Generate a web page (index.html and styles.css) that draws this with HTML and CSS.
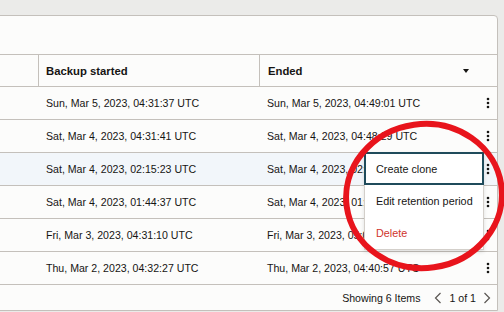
FILE: index.html
```html
<!DOCTYPE html>
<html>
  <head>
    <meta charset="UTF-8" />
    <title>Backups</title>
    <link rel="stylesheet" href="styles.css">
  </head>
  <body>
    <div class="panel">
      <div class="toolbar"></div>
      <div class="table">
        <div class="row head">
          <div class="cell first"></div>
          <div class="cell">Backup started</div>
          <div class="cell ended">Ended <span class="sort"></span></div>
          <div class="cell kebab"></div>
        </div>
        <div class="row">
          <div class="cell first"></div>
          <div class="cell">Sun, Mar 5, 2023, 04:31:37 UTC</div>
          <div class="cell">Sun, Mar 5, 2023, 04:49:01 UTC</div>
          <div class="cell kebab"><svg width="4" height="12" viewBox="0 0 4 12"><circle cx="2" cy="2" r="1.3"/><circle cx="2" cy="6" r="1.3"/><circle cx="2" cy="10" r="1.3"/></svg></div>
        </div>
        <div class="row">
          <div class="cell first"></div>
          <div class="cell">Sat, Mar 4, 2023, 04:31:41 UTC</div>
          <div class="cell">Sat, Mar 4, 2023, 04:48:29 UTC</div>
          <div class="cell kebab"><svg width="4" height="12" viewBox="0 0 4 12"><circle cx="2" cy="2" r="1.3"/><circle cx="2" cy="6" r="1.3"/><circle cx="2" cy="10" r="1.3"/></svg></div>
        </div>
        <div class="row selected">
          <div class="cell first"></div>
          <div class="cell">Sat, Mar 4, 2023, 02:15:23 UTC</div>
          <div class="cell">Sat, Mar 4, 2023, 02:33:12 UTC</div>
          <div class="cell kebab"><svg width="4" height="12" viewBox="0 0 4 12"><circle cx="2" cy="2" r="1.3"/><circle cx="2" cy="6" r="1.3"/><circle cx="2" cy="10" r="1.3"/></svg></div>
        </div>
        <div class="row">
          <div class="cell first"></div>
          <div class="cell">Sat, Mar 4, 2023, 01:44:37 UTC</div>
          <div class="cell">Sat, Mar 4, 2023, 01:59:44 UTC</div>
          <div class="cell kebab"><svg width="4" height="12" viewBox="0 0 4 12"><circle cx="2" cy="2" r="1.3"/><circle cx="2" cy="6" r="1.3"/><circle cx="2" cy="10" r="1.3"/></svg></div>
        </div>
        <div class="row">
          <div class="cell first"></div>
          <div class="cell">Fri, Mar 3, 2023, 04:31:10 UTC</div>
          <div class="cell">Fri, Mar 3, 2023, 05:02:18 UTC</div>
          <div class="cell kebab"><svg width="4" height="12" viewBox="0 0 4 12"><circle cx="2" cy="2" r="1.3"/><circle cx="2" cy="6" r="1.3"/><circle cx="2" cy="10" r="1.3"/></svg></div>
        </div>
        <div class="row">
          <div class="cell first"></div>
          <div class="cell">Thu, Mar 2, 2023, 04:32:27 UTC</div>
          <div class="cell">Thu, Mar 2, 2023, 04:40:57 UTC</div>
          <div class="cell kebab"><svg width="4" height="12" viewBox="0 0 4 12"><circle cx="2" cy="2" r="1.3"/><circle cx="2" cy="6" r="1.3"/><circle cx="2" cy="10" r="1.3"/></svg></div>
        </div>
      </div>
      <div class="footer">
        <span>Showing 6 Items</span>
        <span class="pager">
          <svg width="8" height="12" viewBox="0 0 8 12"><path d="M6.5 1 L1.5 6 L6.5 11" /></svg>
          <span>1 of 1</span>
          <svg width="8" height="12" viewBox="0 0 8 12"><path d="M1.5 1 L6.5 6 L1.5 11" /></svg>
        </span>
      </div>
    </div>

    <div class="menu">
      <div class="item focus">Create clone</div>
      <div class="item">Edit retention period</div>
      <div class="item danger">Delete</div>
    </div>

    <svg class="mark" width="504" height="312" viewBox="0 0 504 312">
      <ellipse cx="424" cy="196" rx="78" ry="72" transform="rotate(-8 424 196)" />
    </svg>
  </body>
</html>
```

FILE: styles.css
```css
body {
  margin: 0;
  background: #ebebe9;
  font-family: "Liberation Sans", Arial, sans-serif;
  color: #161513;
  overflow: hidden;
  height: 312px;
  position: relative;
}

.panel {
  margin-top: 15px;
  margin-left: -2px;
  width: 498px;
  height: 294px;
  background: #fcfcfb;
  border: 1px solid #c4c0bb;
  border-top-right-radius: 4px;
  display: flex;
  flex-direction: column;
}

.toolbar {
  height: 38px;
}

.row {
  display: grid;
  grid-template-columns: 39px 221px 217px 21px;
  height: 32px;
  border-bottom: 1px solid #c4c0bb;
  font-size: 10.6px;
}

.row.head {
  border-top: 1px solid #c4c0bb;
  height: 31px;
  font-weight: bold;
  font-size: 11.3px;
}

.row.selected {
  background: #f2f6fa;
}

.cell {
  display: flex;
  align-items: center;
  padding-left: 8px;
  white-space: nowrap;
  overflow: hidden;
}

.row .cell.first {
  padding-left: 0;
}

.head .cell + .cell {
  border-left: 1px solid #c4c0bb;
  padding-left: 7px;
}

.head .cell.kebab {
  border-left: none;
}

.head .cell.ended {
  padding-left: 8px;
}

.sort {
  margin-left: auto;
  margin-right: 7px;
  width: 0;
  height: 0;
  border-left: 3px solid transparent;
  border-right: 3px solid transparent;
  border-top: 4px solid #161513;
}

.cell.kebab {
  padding-left: 10px;
}

.kebab svg {
  fill: #161513;
}

.footer {
  flex: 1;
  display: flex;
  align-items: center;
  justify-content: flex-end;
  gap: 14px;
  padding-right: 6px;
  font-size: 10.6px;
}

.pager {
  display: flex;
  align-items: center;
  gap: 7px;
}

.pager svg path {
  fill: none;
  stroke: #5a5652;
  stroke-width: 1.2;
}

.menu {
  position: absolute;
  left: 364px;
  top: 152px;
  width: 118px;
  background: #ffffff;
  border: 1px solid #d3cfca;
  box-shadow: 0 2px 4px rgba(0, 0, 0, 0.12);
  font-size: 10.8px;
}

.item {
  height: 32px;
  display: flex;
  align-items: center;
  padding-left: 11px;
  white-space: nowrap;
}

.item.focus {
  border: 2px solid #1f4b5b;
  height: 29px;
  padding-left: 10px;
  margin: -1px -1px 0 -1px;
}

.item.danger {
  color: #d0342c;
}

.mark {
  position: absolute;
  left: 0;
  top: 0;
  pointer-events: none;
}

.mark ellipse {
  fill: none;
  stroke: #e8141c;
  stroke-width: 6;
}
```
